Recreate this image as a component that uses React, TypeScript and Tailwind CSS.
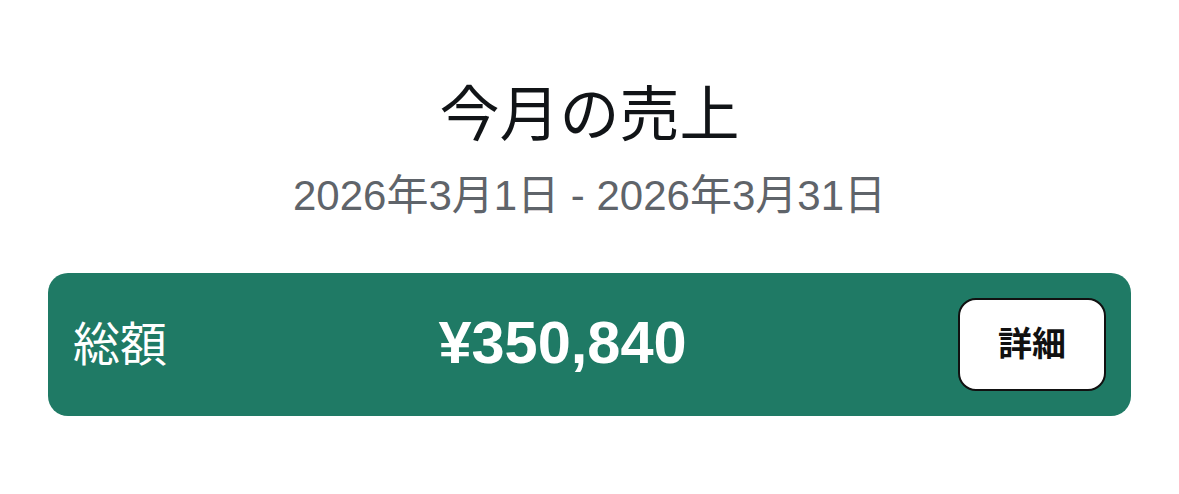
export default function App() {
  return (
    <div
      className="min-h-[494px] bg-white px-12 pt-20"
      style={{ fontFamily: '"Liberation Sans", "Noto Sans CJK JP", sans-serif' }}
    >
      {/* Header */}
      <div className="text-center">
        <h1 className="text-[60px] leading-[72px] text-[#111417]">今月の売上</h1>
        <p className="mt-[19px] text-[42px] leading-[50px] text-[#5f646a]">
          2026年3月1日 - 2026年3月31日
        </p>
      </div>

      {/* Total card */}
      <div className="mt-[52px] flex items-center justify-between rounded-[20px] bg-[#1f7a65] px-[25px] py-[25px]">
        <span className="text-[47px] leading-none text-white">総額</span>
        <span className="-mt-1 text-[59.5px] font-bold leading-none text-white">¥350,840</span>
        <button className="flex h-[93px] w-[148px] items-center justify-center rounded-[18px] border-2 border-[#111] bg-white text-[34px] font-bold text-[#111]">
          詳細
        </button>
      </div>
    </div>
  );
}
